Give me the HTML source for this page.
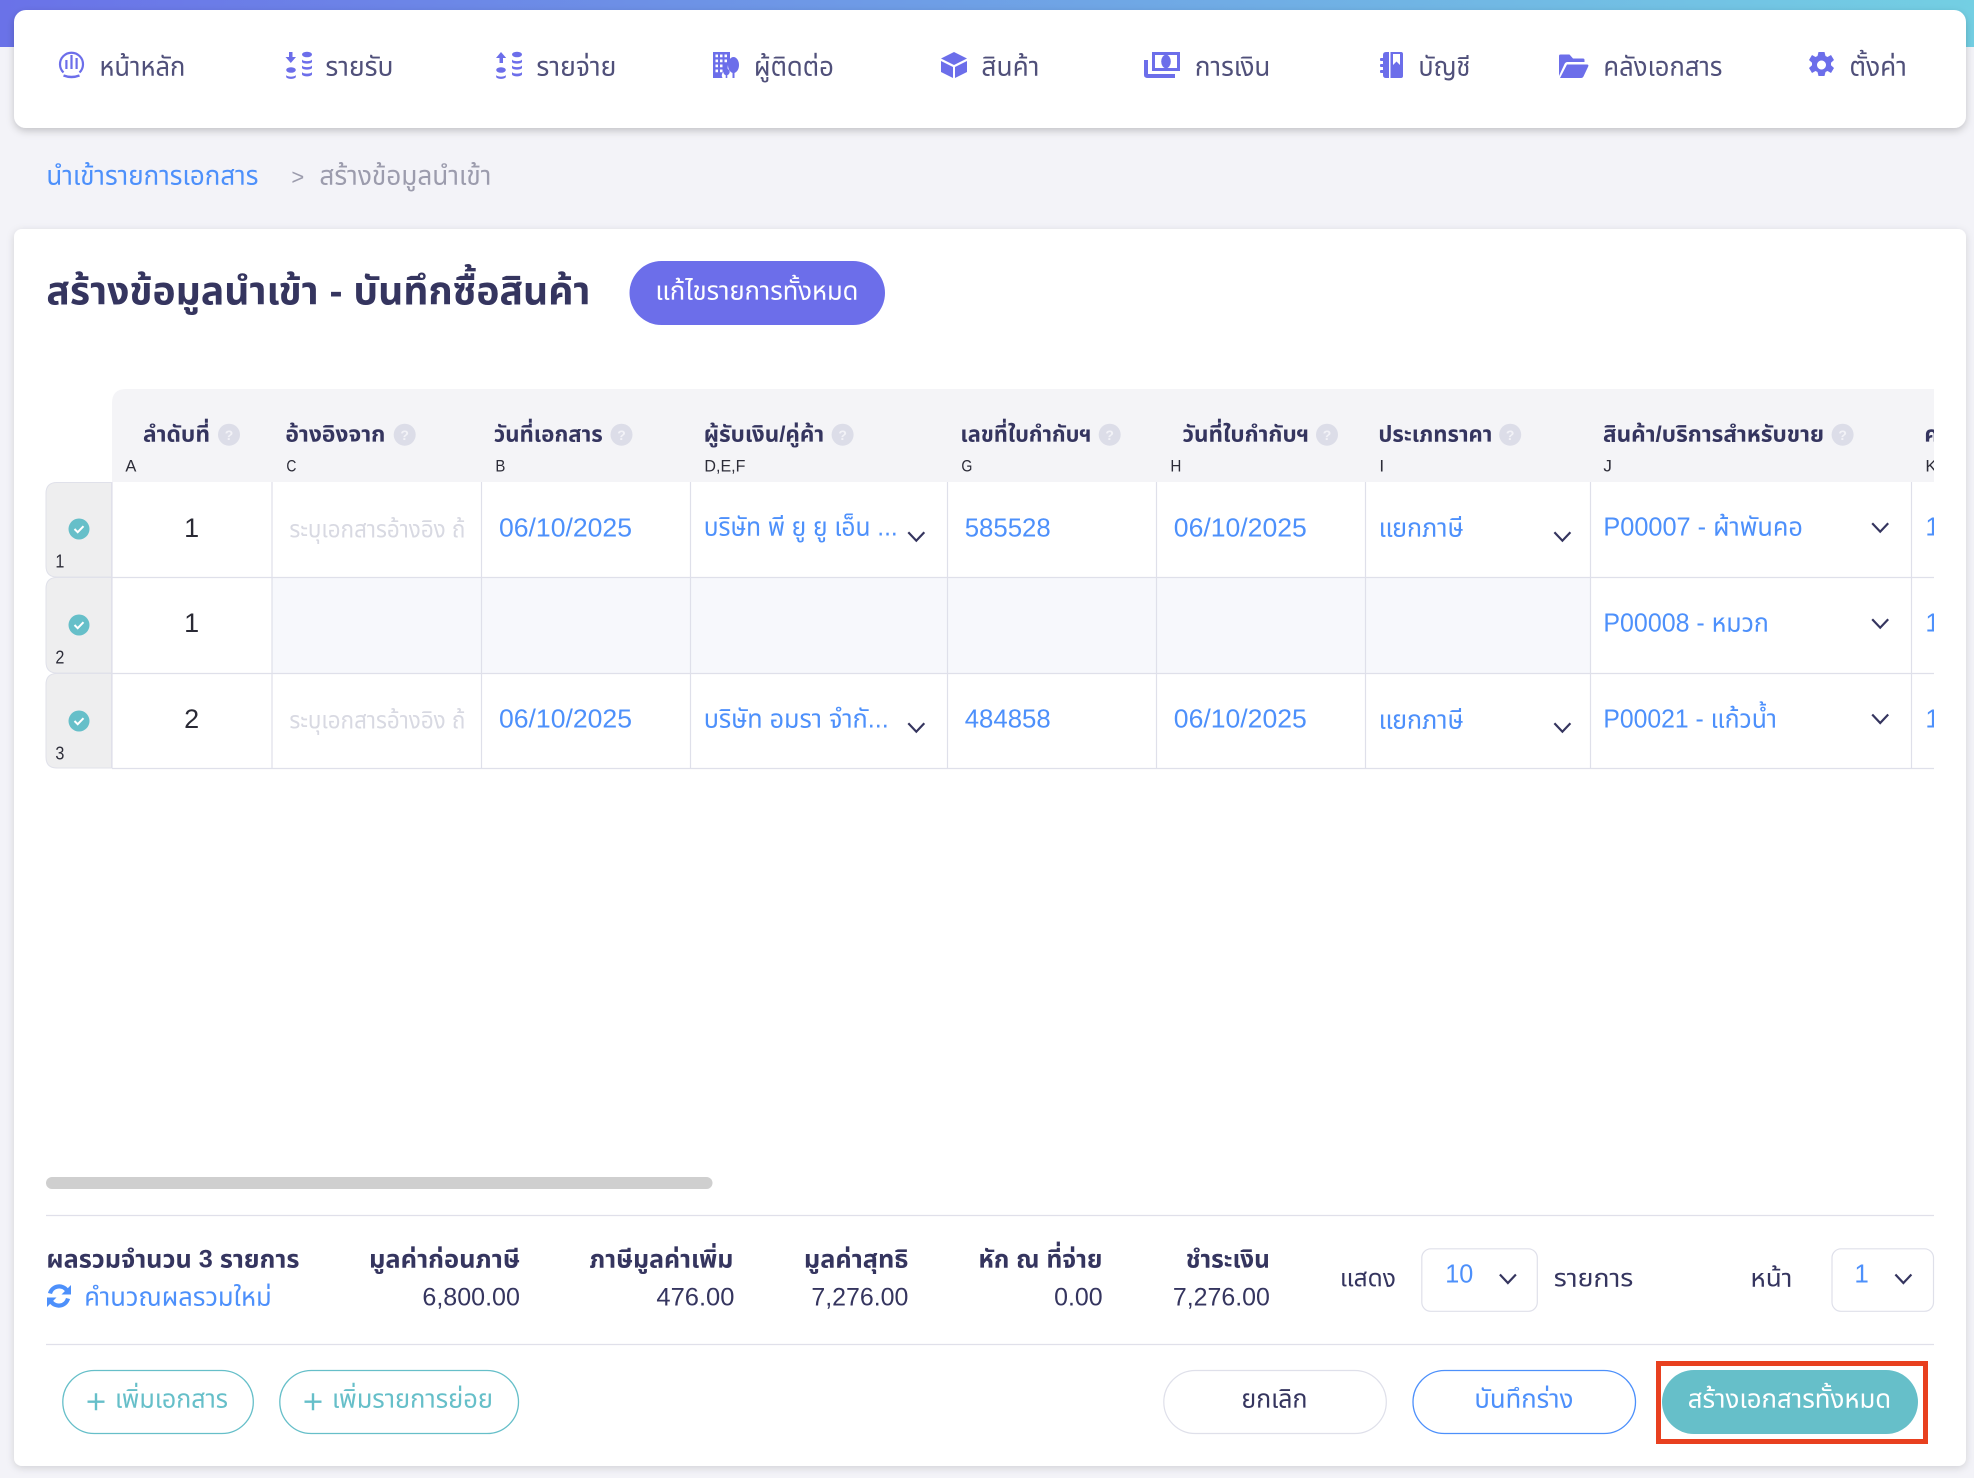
<!DOCTYPE html>
<html lang="th">
<head>
<meta charset="utf-8">
<title>สร้างข้อมูลนำเข้า</title>
<style>
html,body{margin:0;padding:0;width:1974px;height:1478px;overflow:hidden;background:#f3f3f8}
svg{display:block;position:absolute;left:0;top:0}
text{font-family:"Liberation Sans","Noto Sans Thai","Noto Sans Thai UI","Loma","Garuda","Noto Sans CJK SC",sans-serif;white-space:pre;transform:translate(-.6px,-.3px)}
.nav{font-size:27px;fill:#50507a}
.bc{font-size:27px}
.h{font-size:22px;font-weight:700;fill:#35355f}
.sub{font-size:17px;fill:#2c2c38}
.q{font-size:14px;font-weight:700;fill:#f2f2f7;text-anchor:middle}
.q text,.n text{transform:none}
.b{font-size:26px;fill:#4d90fb}
.ph{font-size:24px;fill:#d8d9e2}
.n{font-size:27px;fill:#2a2a35;text-anchor:middle}
.gn{font-size:18px;fill:#2c2c38}
.sh{font-size:25px;font-weight:700;fill:#35355f}
.sv{font-size:25px;fill:#35355f}
.bt{font-size:26px}
</style>
</head>
<body>
<svg width="1974" height="1478" viewBox="0 0 1974 1478" xmlns="http://www.w3.org/2000/svg">
<defs>
<linearGradient id="g" x1="0" x2="1" y1="0" y2="0"><stop offset="0" stop-color="#6a72e8"/><stop offset="1" stop-color="#73cfe3"/></linearGradient>
<filter id="s1" x="-2%" y="-20%" width="104%" height="150%"><feDropShadow dx="0" dy="3" stdDeviation="4" flood-color="#000" flood-opacity=".2"/></filter>
<filter id="s2" x="-2%" y="-3%" width="104%" height="106%"><feDropShadow dx="0" dy="2" stdDeviation="4" flood-color="#000" flood-opacity=".14"/></filter>
<clipPath id="tc"><rect x="40" y="380" width="1894" height="400"/></clipPath>
<g id="chev"><path d="M-8-4.500 0 4 8-4.500" fill="none" stroke="#35355f" stroke-width="2.200"/></g>
<g id="chk"><circle r="10.500" fill="#66bfc9"/><path d="M-4.500 0-1.300 3.200 4.500-2.800" fill="none" stroke="#fff" stroke-width="2"/></g>
<g id="coins" fill="#6c6eea"><ellipse cx="0" cy="0" rx="5" ry="2.800"/><path d="M-5 5c1 2.200 9 2.200 10 0v2.500c-1 2.200-9 2.200-10 0zM-5 11c1 2.200 9 2.200 10 0v2.500c-1 2.200-9 2.200-10 0zM-5 17.500c1 2.200 9 2.200 10 0v2.500c-1 2.500-9 2.500-10 0z"/></g>
</defs>

<!-- top gradient -->
<rect x="0" y="0" width="1974" height="47" fill="url(#g)"/>

<!-- nav card -->
<rect x="14" y="10" width="1952" height="118" rx="12" fill="#fff" filter="url(#s1)"/>

<!-- nav icons -->
<g fill="#6c6eea">
<path d="M63.500 72.500a11.500 11.500 0 1 1 16 0" fill="none" stroke="#6c6eea" stroke-width="2.200"/>
<path d="M63.500 75.500q8 3 16 0" fill="none" stroke="#6c6eea" stroke-width="2.400"/>
<rect x="65.300" y="60" width="2.200" height="9"/><rect x="70.400" y="55" width="2.200" height="14"/><rect x="75.500" y="58" width="2.200" height="11"/>

<path d="M289 52h3.500v5h3.500l-5.200 6-5.300-6h3.500z"/>
<ellipse cx="291" cy="70" rx="4.800" ry="2.800"/><path d="M286.200 75c1 2.200 8.600 2.200 9.600 0v2c-1 2.500-8.600 2.500-9.600 0z"/>
<use href="#coins" x="307" y="54.500"/>

<path d="M501 52l5.200 6H503v5h-3.500v-5h-3.500z"/>
<ellipse cx="501" cy="70" rx="4.800" ry="2.800"/><path d="M496.200 75c1 2.200 8.600 2.200 9.600 0v2c-1 2.500-8.600 2.500-9.600 0z"/>
<use href="#coins" x="517" y="54.500"/>

<path fill-rule="evenodd" d="M713 52h17v10a8 8 0 0 0-2 8l-1 .5a5 5 0 0 0-4.500 7.500h-9.500zM715.500 54.500v2.800h2.500v-2.800zM720 54.500v2.800h2.500v-2.800zM724.500 54.500v2.800h2.500v-2.800zM715.500 59.500v2.800h2.500v-2.800zM720 59.500v2.800h2.500v-2.800zM724.500 59.500v2.800h2.500v-2.800zM715.500 64.500v2.800h2.500v-2.800zM720 64.500v2.800h2.500v-2.800zM715.500 69.500v2.800h2.500v-2.800zM720 69.500v2.800h2.500v-2.800z"/>
<ellipse cx="733.500" cy="65" rx="5.500" ry="8"/><rect x="732.500" y="70" width="2" height="8"/>
<circle cx="726.500" cy="72" r="3.200"/><rect x="725.700" y="73" width="1.600" height="5"/>

<path d="M954 52l13 6.500-13 6.500-13-6.500zM941 61l12 6v11l-12-6zM967 61l-12 6v11l12-6z"/>

<path fill-rule="evenodd" d="M1152 52h28v19h-28zM1155 55v13h22V55z"/>
<ellipse cx="1166" cy="61.500" rx="4.800" ry="6.800"/>
<path d="M1144 60h4v14h27v4h-27q-4 0-4-3z"/>

<path fill-rule="evenodd" d="M1383 55q0-3 3-3h15q2 0 2 2v22q0 2-2 2h-15q-3 0-3-3zM1389 52v26h1.500V52zM1393 54v11l3.500-3.500 3.500 3.500V54z"/>
<rect x="1380" y="58" width="4" height="3" rx="1"/><rect x="1380" y="64" width="4" height="3" rx="1"/><rect x="1380" y="70" width="4" height="3" rx="1"/>

<path d="M1559 76V56q0-1.500 1.500-1.500h9l3.500 4h10q1.500 0 1.500 1.500v2h-17q-2 0-3 2z"/>
<path d="M1567 64.500h20q2 0 1.200 2l-4.500 9.500q-.7 2-2.700 2h-21z"/>

<path fill-rule="evenodd" d="M1819 52h6l1 4 2 1 3.500-2 3 5-3 2.700v2.600l3 2.700-3 5-3.500-2-2 1-1 4h-6l-1-4-2-1-3.500 2-3-5 3-2.700v-2.600l-3-2.700 3-5 3.500 2 2-1zM1822 60.500a4.500 4.500 0 1 0 .01 0z" transform="translate(-.5 0)"/>
</g>

<!-- nav text -->
<g class="nav">
<text x="100" y="76" textLength="86" lengthAdjust="spacingAndGlyphs">หน้าหลัก</text>
<text x="326" y="76" textLength="68" lengthAdjust="spacingAndGlyphs">รายรับ</text>
<text x="537" y="76" textLength="80" lengthAdjust="spacingAndGlyphs">รายจ่าย</text>
<text x="754.500" y="76" textLength="80" lengthAdjust="spacingAndGlyphs">ผู้ติดต่อ</text>
<text x="982" y="76" textLength="58" lengthAdjust="spacingAndGlyphs">สินค้า</text>
<text x="1195.500" y="76" textLength="75.500" lengthAdjust="spacingAndGlyphs">การเงิน</text>
<text x="1419" y="76" textLength="52" lengthAdjust="spacingAndGlyphs">บัญชี</text>
<text x="1604" y="76" textLength="119" lengthAdjust="spacingAndGlyphs">คลังเอกสาร</text>
<text x="1850" y="76" textLength="57.500" lengthAdjust="spacingAndGlyphs">ตั้งค่า</text>
</g>

<!-- breadcrumb -->
<text class="bc" x="47" y="185" textLength="212" lengthAdjust="spacingAndGlyphs" fill="#4d90fb">นำเข้ารายการเอกสาร</text>
<text class="bc" x="292" y="185" fill="#9c9cad" style="font-size:22px">&gt;</text>
<text class="bc" x="320" y="185" textLength="172" lengthAdjust="spacingAndGlyphs" fill="#9c9cad">สร้างข้อมูลนำเข้า</text>

<!-- main card -->
<rect x="14" y="229" width="1952" height="1237" rx="8" fill="#fff" filter="url(#s2)"/>

<text x="47" y="305" font-size="39" font-weight="700" fill="#35355f" textLength="544" lengthAdjust="spacingAndGlyphs">สร้างข้อมูลนำเข้า - บันทึกซื้อสินค้า</text>

<rect x="629.500" y="261" width="255.500" height="64" rx="32" fill="#6c6eea"/>
<text class="bt" x="656" y="300" fill="#fff" textLength="203" lengthAdjust="spacingAndGlyphs">แก้ไขรายการทั้งหมด</text>

<!-- table -->
<g clip-path="url(#tc)">
<path d="M112 482V403q0-14 14-14H1934v93z" fill="#f4f4f7"/>
<rect x="272" y="577" width="1318" height="97" fill="#f7f8fc"/>

<g fill="#eeeeef" stroke="#e0e1ea" stroke-width="1">
<path d="M111.500 482.500H57q-11 0-11 11V566q0 11 11 11h54.500z"/>
<path d="M111.500 577.500H57q-11 0-11 11V662q0 11 11 11h54.500z"/>
<path d="M111.500 673.500H57q-11 0-11 11V757q0 11 11 11h54.500z"/>
</g>

<g stroke="#dfe0ea" stroke-width="1.200" fill="none">
<path d="M112 577.500H1934M112 673.500H1934M112 768.500H1934"/>
<path d="M112 482V768M272 482V768M481.500 482V768M690.500 482V768M947.500 482V768M1156.500 482V768M1365.500 482V768M1590.500 482V768M1911.500 482V768"/>
</g>

<!-- header -->
<g class="h">
<text x="143.600" y="442" textLength="67" lengthAdjust="spacingAndGlyphs">ลำดับที่</text>
<text x="286" y="442" textLength="100" lengthAdjust="spacingAndGlyphs">อ้างอิงจาก</text>
<text x="494.400" y="442" textLength="109" lengthAdjust="spacingAndGlyphs">วันที่เอกสาร</text>
<text x="704.300" y="442" textLength="120.500" lengthAdjust="spacingAndGlyphs">ผู้รับเงิน/คู่ค้า</text>
<text x="961" y="442" textLength="131" lengthAdjust="spacingAndGlyphs">เลขที่ใบกำกับฯ</text>
<text x="1183" y="442" textLength="126.500" lengthAdjust="spacingAndGlyphs">วันที่ใบกำกับฯ</text>
<text x="1379" y="442" textLength="114" lengthAdjust="spacingAndGlyphs">ประเภทราคา</text>
<text x="1603.600" y="442" textLength="221" lengthAdjust="spacingAndGlyphs">สินค้า/บริการสำหรับขาย</text>
<text x="1925" y="442">ค</text>
</g>
<g fill="#dcdde8">
<circle cx="229" cy="434.700" r="11"/><circle cx="404.700" cy="434.700" r="11"/><circle cx="621.500" cy="434.700" r="11"/><circle cx="842.600" cy="434.700" r="11"/><circle cx="1109.700" cy="434.700" r="11"/><circle cx="1327" cy="434.700" r="11"/><circle cx="1510.200" cy="434.700" r="11"/><circle cx="1842.600" cy="434.700" r="11"/>
</g>
<g class="q">
<text x="229" y="440">?</text><text x="404.700" y="440">?</text><text x="621.500" y="440">?</text><text x="842.600" y="440">?</text><text x="1109.700" y="440">?</text><text x="1327" y="440">?</text><text x="1510.200" y="440">?</text><text x="1842.600" y="440">?</text>
</g>
<g class="sub">
<text x="126" y="472" textLength="11" lengthAdjust="spacingAndGlyphs">A</text><text x="287" y="472" textLength="10" lengthAdjust="spacingAndGlyphs">C</text><text x="496" y="472" textLength="10" lengthAdjust="spacingAndGlyphs">B</text><text x="705" y="472" textLength="41" lengthAdjust="spacingAndGlyphs">D,E,F</text><text x="962" y="472" textLength="11" lengthAdjust="spacingAndGlyphs">G</text><text x="1171" y="472" textLength="11" lengthAdjust="spacingAndGlyphs">H</text><text x="1380" y="472">I</text><text x="1604" y="472">J</text><text x="1926" y="472">K</text>
</g>

<!-- gutter -->
<use href="#chk" x="79" y="529"/><use href="#chk" x="79" y="625"/><use href="#chk" x="79" y="721"/>
<g class="gn"><text x="56" y="568" textLength="9" lengthAdjust="spacingAndGlyphs">1</text><text x="56" y="664" textLength="9" lengthAdjust="spacingAndGlyphs">2</text><text x="56" y="760" textLength="9" lengthAdjust="spacingAndGlyphs">3</text></g>

<!-- row numbers -->
<g class="n"><text x="191.700" y="537">1</text><text x="191.700" y="632">1</text><text x="191.700" y="728">2</text></g>

<!-- placeholders -->
<g class="ph">
<text x="290" y="538" textLength="176" lengthAdjust="spacingAndGlyphs">ระบุเอกสารอ้างอิง ถ้</text>
<text x="290" y="729" textLength="176" lengthAdjust="spacingAndGlyphs">ระบุเอกสารอ้างอิง ถ้</text>
</g>

<!-- blue values -->
<g class="b">
<text x="499.600" y="537" textLength="133" lengthAdjust="spacingAndGlyphs">06/10/2025</text>
<text x="499.600" y="728" textLength="133" lengthAdjust="spacingAndGlyphs">06/10/2025</text>
<text x="704.300" y="536" textLength="194" lengthAdjust="spacingAndGlyphs">บริษัท พี ยู ยู เอ็น ...</text>
<text x="704.300" y="728" textLength="185" lengthAdjust="spacingAndGlyphs">บริษัท อมรา จำกั...</text>
<text x="965.300" y="537" textLength="86" lengthAdjust="spacingAndGlyphs">585528</text>
<text x="965.300" y="728" textLength="86" lengthAdjust="spacingAndGlyphs">484858</text>
<text x="1174.400" y="537" textLength="133" lengthAdjust="spacingAndGlyphs">06/10/2025</text>
<text x="1174.400" y="728" textLength="133" lengthAdjust="spacingAndGlyphs">06/10/2025</text>
<text x="1379.200" y="537" textLength="85" lengthAdjust="spacingAndGlyphs">แยกภาษี</text>
<text x="1379.200" y="729" textLength="85" lengthAdjust="spacingAndGlyphs">แยกภาษี</text>
<text x="1604" y="536" textLength="199.500" lengthAdjust="spacingAndGlyphs">P00007 - ผ้าพันคอ</text>
<text x="1604" y="632" textLength="165.500" lengthAdjust="spacingAndGlyphs">P00008 - หมวก</text>
<text x="1604" y="728" textLength="173.500" lengthAdjust="spacingAndGlyphs">P00021 - แก้วน้ำ</text>
<text x="1926" y="536">1</text><text x="1926" y="632">1</text><text x="1926" y="728">1</text>
</g>

<!-- chevrons -->
<use href="#chev" x="916.300" y="536.700"/><use href="#chev" x="916.300" y="727.700"/>
<use href="#chev" x="1562.400" y="536.700"/><use href="#chev" x="1562.400" y="727.700"/>
<use href="#chev" x="1880.200" y="527.700"/><use href="#chev" x="1880.200" y="623.700"/><use href="#chev" x="1880.200" y="719"/>
</g>

<!-- scrollbar -->
<rect x="46" y="1177" width="666.500" height="12" rx="6" fill="#cfcfcf"/>

<!-- dividers -->
<path d="M46 1215.500H1934M46 1344.500H1934" stroke="#e0e0ea" stroke-width="1.200"/>

<!-- summary -->
<g class="sh">
<text x="47" y="1268" textLength="253" lengthAdjust="spacingAndGlyphs">ผลรวมจำนวน 3 รายการ</text>
<text x="369.600" y="1268" textLength="151" lengthAdjust="spacingAndGlyphs">มูลค่าก่อนภาษี</text>
<text x="590" y="1268" textLength="144" lengthAdjust="spacingAndGlyphs">ภาษีมูลค่าเพิ่ม</text>
<text x="804.500" y="1268" textLength="104.500" lengthAdjust="spacingAndGlyphs">มูลค่าสุทธิ</text>
<text x="979" y="1268" textLength="124" lengthAdjust="spacingAndGlyphs">หัก ณ ที่จ่าย</text>
<text x="1186.500" y="1268" textLength="84" lengthAdjust="spacingAndGlyphs">ชำระเงิน</text>
</g>
<g class="sv">
<text x="423" y="1306" textLength="97.500" lengthAdjust="spacingAndGlyphs">6,800.00</text>
<text x="657" y="1306" textLength="78" lengthAdjust="spacingAndGlyphs">476.00</text>
<text x="812" y="1306" textLength="97" lengthAdjust="spacingAndGlyphs">7,276.00</text>
<text x="1054.700" y="1306" textLength="48.500" lengthAdjust="spacingAndGlyphs">0.00</text>
<text x="1173.500" y="1306" textLength="97" lengthAdjust="spacingAndGlyphs">7,276.00</text>
</g>
<g fill="none" stroke="#4d90fb" stroke-width="4.200">
<path d="M50 1293.500a9.500 9.500 0 0 1 17-3"/>
<path d="M68 1298.500a9.500 9.500 0 0 1-17 3"/>
</g>
<path d="M71 1285v9.500h-9.500zM47 1307v-9.500h9.500z" fill="#4d90fb"/>
<text class="b" x="84.800" y="1306" textLength="187.500" lengthAdjust="spacingAndGlyphs">คำนวณผลรวมใหม่</text>

<!-- pagination -->
<text class="sv" x="1340.500" y="1287" textLength="56" lengthAdjust="spacingAndGlyphs">แสดง</text>
<rect x="1421.800" y="1248.800" width="115.500" height="62.500" rx="9" fill="#fff" stroke="#dfe0ea" stroke-width="1.200"/>
<text class="b" x="1445.800" y="1283" textLength="28" lengthAdjust="spacingAndGlyphs">10</text>
<use href="#chev" x="1507.900" y="1279"/>
<text class="sv" x="1554.400" y="1287" textLength="79.500" lengthAdjust="spacingAndGlyphs">รายการ</text>
<text class="sv" x="1751" y="1287" textLength="42" lengthAdjust="spacingAndGlyphs">หน้า</text>
<rect x="1832" y="1248.800" width="101.500" height="62.500" rx="9" fill="#fff" stroke="#dfe0ea" stroke-width="1.200"/>
<text class="b" x="1855" y="1283">1</text>
<use href="#chev" x="1903.400" y="1279"/>

<!-- left buttons -->
<rect x="62.800" y="1370.500" width="190.500" height="63" rx="31.500" fill="#fff" stroke="#66bfc9" stroke-width="1.300"/>
<path d="M87.500 1401.700h17M96 1393.200v17" stroke="#66bfc9" stroke-width="2.400"/>
<text class="bt" x="115.600" y="1408" fill="#66bfc9" textLength="113" lengthAdjust="spacingAndGlyphs">เพิ่มเอกสาร</text>
<rect x="279.800" y="1370.500" width="238.700" height="63" rx="31.500" fill="#fff" stroke="#66bfc9" stroke-width="1.300"/>
<path d="M304.500 1401.700h17M313 1393.200v17" stroke="#66bfc9" stroke-width="2.400"/>
<text class="bt" x="332.600" y="1408" fill="#66bfc9" textLength="161" lengthAdjust="spacingAndGlyphs">เพิ่มรายการย่อย</text>

<!-- right buttons -->
<rect x="1163.800" y="1370.500" width="222.500" height="63" rx="31.500" fill="#fff" stroke="#dfe0ea" stroke-width="1.200"/>
<text class="bt" x="1242" y="1408" fill="#35355f" textLength="66" lengthAdjust="spacingAndGlyphs">ยกเลิก</text>
<rect x="1413" y="1370.500" width="222.500" height="63" rx="31.500" fill="#fff" stroke="#4d90fb" stroke-width="1.300"/>
<text class="bt" x="1475" y="1408" fill="#4d90fb" textLength="99" lengthAdjust="spacingAndGlyphs">บันทึกร่าง</text>
<rect x="1662" y="1370" width="256" height="64" rx="32" fill="#66bfc9"/>
<text class="bt" x="1688.300" y="1408" fill="#fff" textLength="203.500" lengthAdjust="spacingAndGlyphs">สร้างเอกสารทั้งหมด</text>

<!-- red highlight -->
<rect x="1658.500" y="1363.500" width="267" height="78" fill="none" stroke="#e8401f" stroke-width="5"/>
</svg>
</body>
</html>
